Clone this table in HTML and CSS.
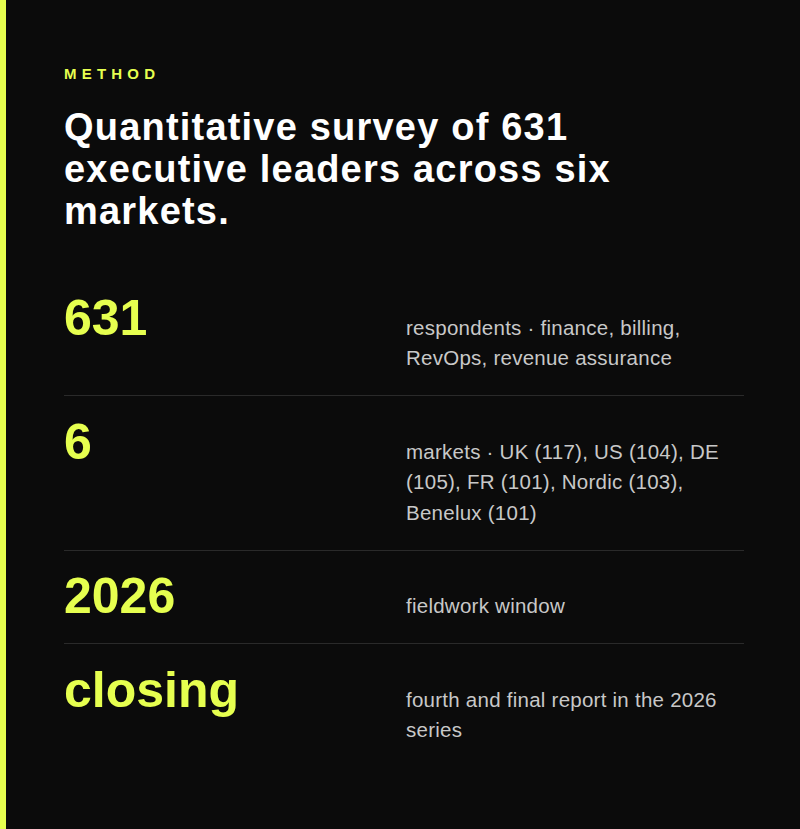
FILE: index.html
```html
<!DOCTYPE html>
<html lang="en">
<head>
<meta charset="utf-8">
<title>Method</title>
<link rel="stylesheet" href="styles.css">
</head>
<body>
<main class="panel">
  <p class="eyebrow">METHOD</p>
  <h1 class="title">Quantitative survey of 631 executive leaders across six markets.</h1>
  <div class="stats">
    <div class="stat">
      <div class="stat-value">631</div>
      <div class="stat-desc">respondents · finance, billing, RevOps, revenue assurance</div>
    </div>
    <div class="stat">
      <div class="stat-value">6</div>
      <div class="stat-desc">markets · UK (117), US (104), DE (105), FR (101), Nordic (103), Benelux (101)</div>
    </div>
    <div class="stat">
      <div class="stat-value">2026</div>
      <div class="stat-desc">fieldwork window</div>
    </div>
    <div class="stat">
      <div class="stat-value">closing</div>
      <div class="stat-desc">fourth and final report in the 2026 series</div>
    </div>
  </div>
</main>
</body>
</html>
```
FILE: styles.css
```css
html, body {
  margin: 0;
  padding: 0;
  background: #0b0b0b;
}
body {
  font-family: "Liberation Sans", Arial, Helvetica, sans-serif;
  color: #ffffff;
}
.panel {
  box-sizing: border-box;
  min-height: 100vh;
  border-left: 6px solid #e6ff4f;
  padding: 65px 56px 40px 58px;
}
.eyebrow {
  margin: 0;
  font-size: 15px;
  line-height: 17px;
  font-weight: 700;
  letter-spacing: 5.2px;
  color: #e6ff4f;
}
.title {
  margin: 24px 0 0;
  font-size: 38px;
  line-height: 42px;
  font-weight: 700;
  letter-spacing: 1.2px;
  color: #ffffff;
}
.stats {
  margin-top: 40px;
}
.stat {
  display: grid;
  grid-template-columns: 342px 1fr;
  align-items: baseline;
  padding: 21.5px 0;
  border-top: 1px solid #2a2a2a;
}
.stat:first-child {
  border-top: none;
}
.stat-value {
  font-size: 50px;
  line-height: 48px;
  font-weight: 700;
  color: #e6ff4f;
}
.stat-desc {
  font-size: 20.5px;
  line-height: 30.5px;
  letter-spacing: 0.25px;
  color: #c8c8c8;
}
```
